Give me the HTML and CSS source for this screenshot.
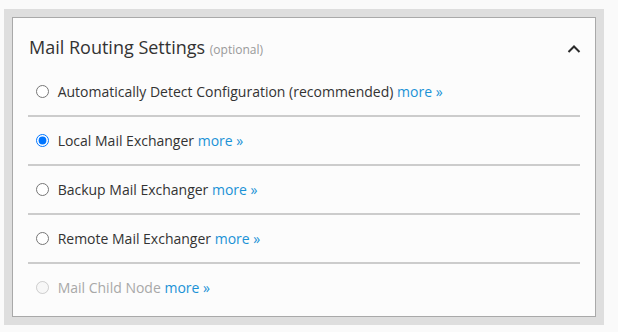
FILE: index.html
```html
<!DOCTYPE html>
<html>
<head>
<meta charset="utf-8">
<link rel="stylesheet" href="styles.css">
</head>
<body>
<div class="wrap">
  <div class="panel">
    <div class="panel-head">
      <h2 class="title">Mail Routing Settings <span class="optional">(optional)</span></h2>
      <svg class="chevron" width="14" height="10" viewBox="0 0 14 10"><polyline points="1.5,8 7,2.5 12.5,8" fill="none" stroke="#2b2b2b" stroke-width="2"/></svg>
    </div>
    <ul class="options">
      <li class="option"><label><input type="radio" name="route"> Automatically Detect Configuration (recommended) <a class="more" href="#">more »</a></label></li>
      <li class="option"><label><input type="radio" name="route" checked> Local Mail Exchanger <a class="more" href="#">more »</a></label></li>
      <li class="option"><label><input type="radio" name="route"> Backup Mail Exchanger <a class="more" href="#">more »</a></label></li>
      <li class="option"><label><input type="radio" name="route"> Remote Mail Exchanger <a class="more" href="#">more »</a></label></li>
      <li class="option disabled"><label><input type="radio" name="route" disabled> Mail Child Node <a class="more" href="#">more »</a></label></li>
    </ul>
  </div>
</div>
</body>
</html>
```

FILE: styles.css
```css
html, body {
  margin: 0;
  background: #fafafa;
}
body {
  padding: 9px 14px 7px 4px;
  font-family: "Open Sans", "DejaVu Sans", sans-serif;
  color: #333;
}
.wrap {
  background: #dedede;
  padding: 8px;
}
.panel {
  background: #fcfcfc;
  border: 1px solid #a9a9a9;
  padding-bottom: 5px;
}
.panel-head {
  display: flex;
  align-items: center;
  justify-content: space-between;
  padding: 17px 14px 6px 16px;
}
.title {
  margin: 0;
  font-size: 18px;
  font-weight: normal;
  line-height: 25px;
  color: #333;
}
.optional {
  font-size: 12px;
  color: #999;
}
.chevron {
  display: block;
  margin-top: 1px;
}
.options {
  list-style: none;
  margin: 0;
  padding: 0 15px;
}
.option {
  padding: 13px 0 13px 3px;
  font-size: 14px;
  line-height: 21px;
  border-bottom: 2px solid #cccccc;
}
.option:last-child {
  border-bottom: none;
}
.option label {
  display: flex;
  align-items: center;
  white-space: pre;
}
.option input {
  margin: 0 5px 0 5px;
  width: 13px;
  height: 13px;
}
.more {
  color: #1b92d6;
  text-decoration: none;
}
.disabled {
  color: #a8a8a8;
}
```
